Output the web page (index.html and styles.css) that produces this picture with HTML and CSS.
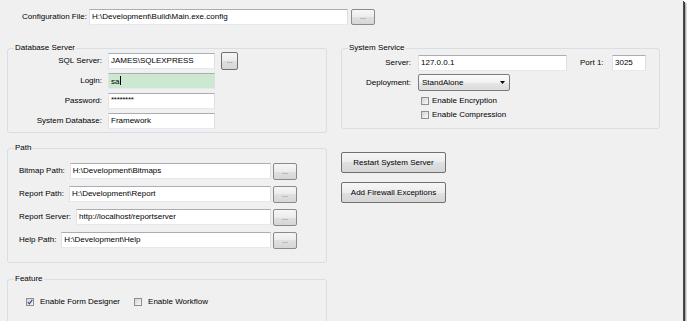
FILE: index.html
```html
<!DOCTYPE html>
<html>
<head>
<meta charset="utf-8">
<link rel="stylesheet" href="styles.css">
</head>
<body>
<div class="window">
  <div class="config-row">
    <span class="lbl config-lbl">Configuration File:</span>
    <div class="tb config-tb">H:\Development\Build\Main.exe.config</div>
    <div class="btn dots config-btn">...</div>
  </div>

  <div class="main">
    <div class="col-left">
      <div class="group db">
        <div class="legend">Database Server</div>
        <div class="db-grid">
          <span class="lbl r">SQL Server:</span>
          <div class="tb">JAMES\SQLEXPRESS</div>
          <div class="btn dots sql-btn">...</div>

          <span class="lbl r">Login:</span>
          <div class="tb login">sa<span class="caret"></span></div>
          <span></span>

          <span class="lbl r">Password:</span>
          <div class="tb pwd">********</div>
          <span></span>

          <span class="lbl r">System Database:</span>
          <div class="tb">Framework</div>
          <span></span>
        </div>
      </div>

      <div class="group path">
        <div class="legend">Path</div>
        <div class="path-rows">
          <div class="path-row"><span class="lbl">Bitmap Path:</span><div class="tb">H:\Development\Bitmaps</div><div class="btn dots">...</div></div>
          <div class="path-row"><span class="lbl">Report Path:</span><div class="tb">H:\Development\Report</div><div class="btn dots">...</div></div>
          <div class="path-row"><span class="lbl">Report Server:</span><div class="tb">http://localhost/reportserver</div><div class="btn dots">...</div></div>
          <div class="path-row"><span class="lbl">Help Path:</span><div class="tb">H:\Development\Help</div><div class="btn dots">...</div></div>
        </div>
      </div>

      <div class="group feature">
        <div class="legend">Feature</div>
        <div class="feature-row">
          <label class="check"><span class="cb checked"><svg width="6" height="6" viewBox="0 0 6 6"><path d="M0.8 3.1 L2.4 4.8 L5.3 0.8" fill="none" stroke="#3b4f7c" stroke-width="1.2"/></svg></span><span class="ctext">Enable Form Designer</span></label>
          <label class="check wf"><span class="cb"></span><span class="ctext">Enable Workflow</span></label>
        </div>
      </div>
    </div>

    <div class="col-right">
      <div class="group svc">
        <div class="legend">System Service</div>
        <div class="svc-rows">
          <div class="svc-row">
            <span class="lbl svc-lbl">Server:</span>
            <div class="tb server-tb">127.0.0.1</div>
            <span class="lbl port-lbl">Port 1:</span>
            <div class="tb port-tb">3025</div>
          </div>
          <div class="svc-row dep">
            <span class="lbl svc-lbl">Deployment:</span>
            <div class="combo"><span>StandAlone</span><svg class="arrow" width="5" height="3" viewBox="0 0 5 3"><path d="M0 0 H5 L2.5 3 Z" fill="#000"/></svg></div>
          </div>
          <div class="svc-check first"><span class="cb"></span><span class="ctext">Enable Encryption</span></div>
          <div class="svc-check"><span class="cb"></span><span class="ctext">Enable Compression</span></div>
        </div>
      </div>
      <div class="btn big restart">Restart System Server</div>
      <div class="btn big firewall">Add Firewall Exceptions</div>
    </div>
  </div>
</div>
</body>
</html>
```

FILE: styles.css
```css
* { box-sizing: border-box; }

body {
  margin: 0;
  background: #ffffff;
  font-family: "Liberation Sans", Arial, sans-serif;
  font-size: 8px;
  line-height: 10px;
  color: #000;
}

.window {
  width: 683px;
  height: 321px;
  background: #f0f0f0;
  overflow: hidden;
  box-shadow: 1px 1px 0 #4a4a4a, 2px 2px 0 #3c3c3c, 3px 3px 2px rgba(0, 0, 0, 0.45);
}

.lbl { white-space: nowrap; }
.lbl.r { text-align: right; }

/* text box */
.tb {
  height: 16px;
  background: #fff;
  border: 1px solid;
  border-color: #abadb3 #dbdfe6 #e3e9ef #e2e3ea;
  padding: 2px 0 0 2px;
  white-space: nowrap;
  overflow: hidden;
}

.login { background: #cde8d1; }
.caret {
  display: inline-block;
  width: 1px;
  height: 9px;
  background: #000;
  vertical-align: -1px;
  margin-left: 1px;
}
.pwd { letter-spacing: -0.3px; padding-top: 1px; }

/* buttons */
.btn {
  border: 1px solid #8a8a8a;
  border-radius: 2px;
  background: linear-gradient(#f6f6f6 0%, #ececec 50%, #e0e0e0 50%, #d6d6d6 100%);
  text-align: center;
  white-space: nowrap;
}
.dots {
  color: #5a5a5a;
  font-size: 7px;
  line-height: 14px;
}

/* config row */
.config-row {
  display: flex;
  align-items: center;
  height: 25px;
  padding: 9px 0 0 22px;
}
.config-lbl { width: 65px; margin-right: 2px; }
.config-tb { width: 259px; }
.config-btn { width: 24px; height: 16px; margin-left: 3px; }

/* main columns */
.main {
  display: flex;
  gap: 14px;
  margin-top: 23px;
  padding-left: 7px;
}
.col-left { width: 320px; }
.col-right { width: 319px; }

/* group box */
.group {
  border: 1px solid #d5dfe5;
  border-radius: 3px;
}
.legend {
  display: table;
  height: 10px;
  margin: -6px 0 0 6px;
  padding: 0 1px;
  background: #f0f0f0;
}

/* database server */
.db-grid {
  display: grid;
  grid-template-columns: 94px 107px 17px;
  grid-auto-rows: 16px;
  column-gap: 6px;
  row-gap: 4px;
  align-items: center;
  padding-bottom: 3px;
}
.db-grid .lbl { line-height: 16px; }
.sql-btn {
  height: 18px;
  margin: -1px 0;
  border-color: #707070;
  line-height: 16px;
}

/* path */
.path { margin-top: 15px; }
.path-rows {
  display: flex;
  flex-direction: column;
  gap: 7px;
  padding: 10px 29px 14px 11px;
}
.path-row {
  display: flex;
  align-items: center;
  height: 16px;
}
.path-row .lbl { margin-right: 5px; }
.path-row .tb { flex: 1; }
.path-row .btn {
  width: 24px;
  height: 17px;
  margin: 0 0 0 2px;
  line-height: 15px;
}

/* feature */
.feature { margin-top: 16px; }
.feature-row {
  display: flex;
  align-items: center;
  height: 10px;
  margin: 13px 0 30px 18px;
}
.check { display: flex; align-items: center; }
.check .ctext { margin-left: 6px; }
.check.wf { margin-left: 14px; }

/* checkbox */
.cb {
  display: inline-flex;
  align-items: center;
  justify-content: center;
  width: 8px;
  height: 8px;
  border: 1px solid #8e8f8f;
  background: linear-gradient(135deg, #d4d4d4, #f8f8f8);
  flex: none;
}

/* system service */
.svc-rows { padding: 2px 0 6px 0; }
.svc-row {
  display: flex;
  align-items: center;
  height: 16px;
}
.svc-lbl {
  width: 69px;
  text-align: right;
  margin-right: 7px;
}
.server-tb { width: 149px; }
.port-lbl { width: 24px; margin-left: 13px; margin-right: 8px; }
.port-tb { width: 34px; }

.svc-row.dep { height: 17px; margin-top: 3px; }
.combo {
  display: flex;
  align-items: center;
  justify-content: space-between;
  width: 92px;
  height: 17px;
  padding: 0 4px 0 3px;
  border: 1px solid #7a7a7a;
  border-radius: 2px;
  background: linear-gradient(#fbfbfb 0%, #f2f2f2 50%, #e6e6e6 50%, #dcdcdc 100%);
}

.svc-check {
  display: flex;
  align-items: center;
  height: 14px;
  padding-left: 79px;
}
.svc-check.first { margin-top: 3px; }
.svc-check .ctext { margin-left: 3px; }

/* big buttons */
.big {
  width: 105px;
  height: 21px;
  line-height: 19px;
  border-color: #707070;
}
.restart { margin-top: 23px; }
.firewall { margin-top: 9px; }
```
